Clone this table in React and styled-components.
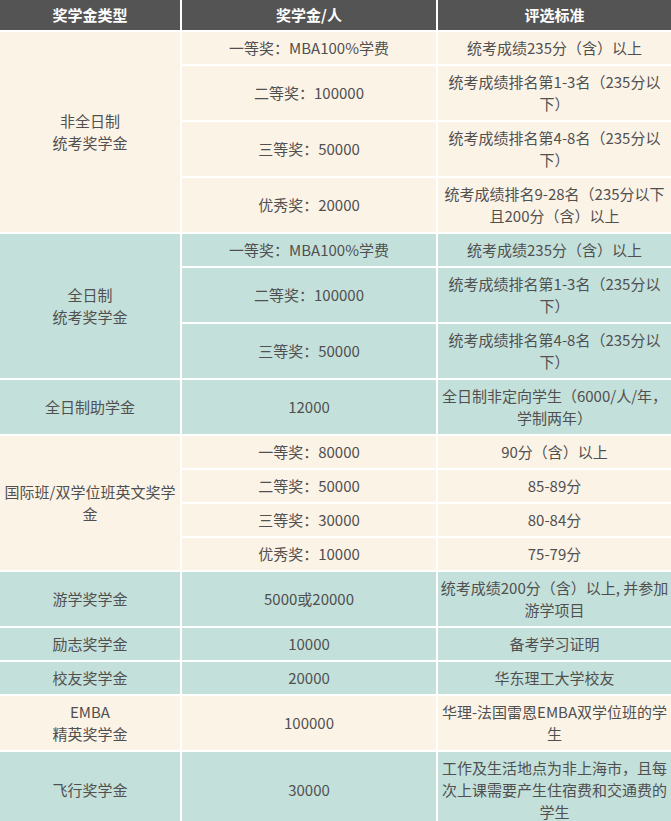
import React from "react";
import styled, { createGlobalStyle } from "styled-components";

const GlobalStyle = createGlobalStyle`
  body {
    margin: 0;
    background: #ffffff;
    font-family: "Noto Sans CJK SC", "Noto Sans", sans-serif;
  }
`;

const tones = {
  cream: "#fcf3e7",
  teal: "#c4e0db",
};

const groups = [
  {
    tone: "cream",
    name: ["非全日制", "统考奖学金"],
    rows: [
      ["一等奖：MBA100%学费", "统考成绩235分（含）以上"],
      ["二等奖：100000", "统考成绩排名第1-3名（235分以下）"],
      ["三等奖：50000", "统考成绩排名第4-8名（235分以下）"],
      ["优秀奖：20000", "统考成绩排名9-28名（235分以下且200分（含）以上"],
    ],
  },
  {
    tone: "teal",
    name: ["全日制", "统考奖学金"],
    rows: [
      ["一等奖：MBA100%学费", "统考成绩235分（含）以上"],
      ["二等奖：100000", "统考成绩排名第1-3名（235分以下）"],
      ["三等奖：50000", "统考成绩排名第4-8名（235分以下）"],
    ],
  },
  {
    tone: "teal",
    name: ["全日制助学金"],
    rows: [["12000", "全日制非定向学生（6000/人/年，学制两年）"]],
  },
  {
    tone: "cream",
    name: ["国际班/双学位班英文奖学金"],
    rows: [
      ["一等奖：80000", "90分（含）以上"],
      ["二等奖：50000", "85-89分"],
      ["三等奖：30000", "80-84分"],
      ["优秀奖：10000", "75-79分"],
    ],
  },
  {
    tone: "teal",
    name: ["游学奖学金"],
    rows: [["5000或20000", "统考成绩200分（含）以上, 并参加游学项目"]],
  },
  {
    tone: "teal",
    name: ["励志奖学金"],
    rows: [["10000", "备考学习证明"]],
  },
  {
    tone: "teal",
    name: ["校友奖学金"],
    rows: [["20000", "华东理工大学校友"]],
  },
  {
    tone: "cream",
    name: ["EMBA", "精英奖学金"],
    rows: [["100000", "华理-法国雷恩EMBA双学位班的学生"]],
  },
  {
    tone: "teal",
    name: ["飞行奖学金"],
    rows: [["30000", "工作及生活地点为非上海市，且每次上课需要产生住宿费和交通费的学生"]],
  },
];

const App = () => {
  return (
    <>
      <GlobalStyle />
      <Table>
        <colgroup>
          <col style={{ width: 181 }} />
          <col style={{ width: 256 }} />
          <col style={{ width: 234 }} />
        </colgroup>
        <thead>
          <tr>
            <HeadCell>奖学金类型</HeadCell>
            <HeadCell>奖学金/人</HeadCell>
            <HeadCell>评选标准</HeadCell>
          </tr>
        </thead>
        <tbody>
          {groups.map((group, gi) =>
            group.rows.map((row, ri) => (
              <tr key={gi + "-" + ri}>
                {ri === 0 && (
                  <Cell $tone={group.tone} rowSpan={group.rows.length}>
                    {group.name.map((line, li) => (
                      <Line key={li}>{line}</Line>
                    ))}
                  </Cell>
                )}
                <Cell $tone={group.tone}>{row[0]}</Cell>
                <Cell $tone={group.tone}>{row[1]}</Cell>
              </tr>
            ))
          )}
        </tbody>
      </Table>
    </>
  );
};

export default App;

const Table = styled.table`
  width: 671px;
  table-layout: fixed;
  border-collapse: collapse;
  border-style: hidden;
  font-size: 15px;
  line-height: 22px;
  color: #505050;
`;

const HeadCell = styled.th`
  height: 30px;
  padding: 4px 1px;
  box-sizing: border-box;
  background: #545454;
  color: #ffffff;
  font-weight: bold;
  text-align: center;
  border: 2px solid #ffffff;
`;

const Cell = styled.td`
  padding: 5px 1px;
  background: ${({ $tone }) => tones[$tone]};
  text-align: center;
  vertical-align: middle;
  border: 2px solid #ffffff;
`;

const Line = styled.div`
  display: block;
`;
